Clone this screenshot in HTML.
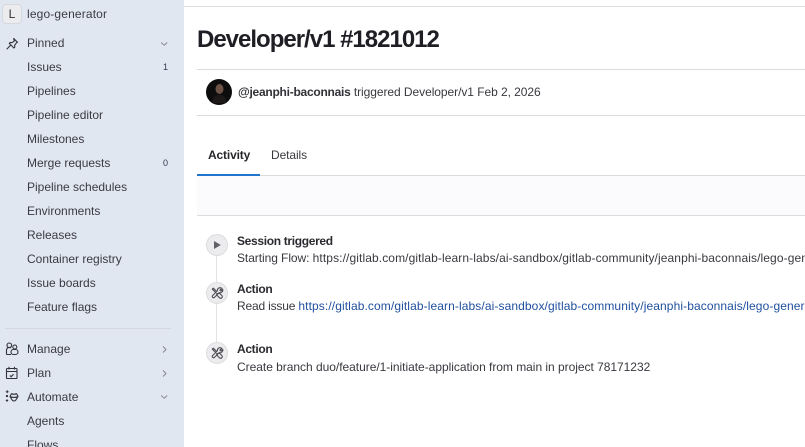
<!DOCTYPE html>
<html><head><meta charset="utf-8">
<style>
html,body{margin:0;padding:0;width:805px;height:447px;overflow:hidden;background:#fff;font-family:"Liberation Sans",sans-serif;color:#3a383f;-webkit-font-smoothing:antialiased}
#wrap{position:absolute;left:0;top:0;width:805px;height:447px;overflow:hidden}
.t{position:absolute;white-space:nowrap;font-size:12px;line-height:16px}
#side{position:absolute;left:0;top:0;width:184px;height:447px;background:#e1e7f0}
.n{left:27px;color:#3a3a44;letter-spacing:0}
.ln{position:absolute;background:#dcdcde;height:1px}
svg{position:absolute;overflow:hidden}
.b{font-weight:bold;color:#2b2a30;letter-spacing:-.33px}
.c{overflow:hidden;width:568px;letter-spacing:-.03px}
.u{letter-spacing:.1px}
.bd{left:163px;font-size:9px;color:#33384f}
</style></head><body><div id="wrap">
<div id="side"></div>
<div style="position:absolute;left:2px;top:4px;width:18px;height:18px;border:1px solid #d5d9e0;border-radius:4px;background:#ececef;text-align:center;font-size:12px;line-height:18px;color:#333">L</div>
<div class="t n" style="top:6px;letter-spacing:.15px">lego-generator</div>

<svg style="left:5px;top:36px" width="16" height="16" viewBox="0 0 16 16" fill="none" stroke="#33333d" stroke-width="1.1"><path d="M8.500 2.300l3.900 3.900-1 .7-1.800 2.400.2 1.800-.9.900-4.600-4.600.9-.9 1.800.2 2.400-1.800z"/><path d="M6 8.800L1.700 13.300"/></svg>
<div class="t n" style="top:35px">Pinned</div>
<svg style="left:160px;top:40px" width="9" height="8" fill="none" stroke="#80808c" stroke-width=".9"><path d="M1.200 2.500l3 2.800 3-2.800"/></svg>
<div class="t n" style="top:59px">Issues</div>
<div class="t bd" style="top:59px">1</div>
<div class="t n" style="top:83px">Pipelines</div>
<div class="t n" style="top:107px">Pipeline editor</div>
<div class="t n" style="top:131px">Milestones</div>
<div class="t n" style="top:155px">Merge requests</div>
<div class="t bd" style="top:155px">0</div>
<div class="t n" style="top:179px">Pipeline schedules</div>
<div class="t n" style="top:203px">Environments</div>
<div class="t n" style="top:227px">Releases</div>
<div class="t n" style="top:251px">Container registry</div>
<div class="t n" style="top:275px">Issue boards</div>
<div class="t n" style="top:299px">Feature flags</div>
<div class="ln" style="left:5px;top:328px;width:166px;background:#d2d7df"></div>

<svg style="left:5px;top:342px" width="14" height="14" fill="none" stroke="#33333d" stroke-width="1.1"><circle cx="4.300" cy="3.300" r="2.300"/><path d="M1.500 12.500V7.800a2.800 2.800 0 0 1 4.500-1.800M1.500 12.500h4.500"/><circle cx="9.800" cy="5" r="2"/><rect x="6" y="7.500" width="7" height="5" rx="2.400"/></svg>
<div class="t n" style="top:341px">Manage</div>
<svg style="left:160px;top:345px" width="9" height="9" fill="none" stroke="#80808c" stroke-width=".9"><path d="M3 1.500l3 3-3 3"/></svg>
<svg style="left:5px;top:366px" width="14" height="14" fill="none" stroke="#33333d" stroke-width="1.1"><rect x="1.500" y="2.500" width="10.500" height="10" rx=".8"/><path d="M1.500 5.500h10.500M4 .8v2.700M9.500 .8v2.700M4.800 9.500l1.300 1.200 2.400-2.400"/></svg>
<div class="t n" style="top:365px">Plan</div>
<svg style="left:160px;top:369px" width="9" height="9" fill="none" stroke="#80808c" stroke-width=".9"><path d="M3 1.500l3 3-3 3"/></svg>
<svg style="left:5px;top:390px" width="15" height="14" fill="none" stroke="#33333d" stroke-width="1.100"><path d="M6.500 3.500c1.500 1 3.500 1 5 0M6.500 3.500L5 6.500l1.800 3c.6 1 1.700 1.500 2.200 1.500s1.600-.5 2.200-1.500l1.800-3-1.500-3M5.200 6.800c2.500.8 5 .8 7.600 0"/><path d="M.8 1.700h2.800M2.200.3v2.800M.8 10.500h2.400M2 9.300v2.400" stroke-width="1"/><circle cx="2" cy="6" r=".6"/></svg>
<div class="t n" style="top:389px">Automate</div>
<svg style="left:160px;top:393px" width="9" height="8" fill="none" stroke="#80808c" stroke-width=".9"><path d="M1.200 2.500l3 2.800 3-2.800"/></svg>
<div class="t n" style="top:413px">Agents</div>
<div class="t n" style="top:437px">Flows</div>

<div class="ln" style="left:184px;top:6px;width:621px"></div>
<div class="t" style="left:197px;top:25px;font-size:24px;line-height:30px;font-weight:bold;color:#1f1e24;letter-spacing:-1px">Developer/v1 #1821012</div>
<div class="ln" style="left:197px;top:69px;width:608px"></div>

<svg style="left:206px;top:79px" width="26" height="26"><circle cx="13" cy="13" r="13" fill="#0d0d0d"/><ellipse cx="13.500" cy="10" rx="4" ry="5" fill="#6e5247"/><path d="M6 24c1-6 3-8 7.500-8s6.500 2 7 8z" fill="#1c1818"/></svg>
<div class="t" style="left:238px;top:84px;color:#3a383f;letter-spacing:-.06px"><b style="color:#333238;letter-spacing:-.25px">@jeanphi-baconnais</b> triggered Developer/v1 Feb 2, 2026</div>
<div class="ln" style="left:197px;top:115px;width:608px"></div>

<div class="t" style="left:208px;top:147px;font-weight:bold;color:#28272d;letter-spacing:-.15px">Activity</div>
<div class="t" style="left:271px;top:147px;color:#3a383f;letter-spacing:-.1px">Details</div>
<div style="position:absolute;left:197px;top:176px;width:608px;height:39px;background:#fbfafd"></div>
<div class="ln" style="left:197px;top:175px;width:608px"></div>
<div style="position:absolute;left:197px;top:174px;width:63px;height:2px;background:#1f75cb"></div>
<div class="ln" style="left:197px;top:215px;width:608px"></div>

<div style="position:absolute;left:216px;top:250px;width:1px;height:100px;background:#e4e4e7"></div>
<svg style="left:206px;top:234px" width="22" height="22"><circle cx="11" cy="11" r="10.500" fill="#ececef" stroke="#dcdcde"/><path d="M8 7v8l6.800-4z" fill="#626168"/></svg>
<svg style="left:206px;top:282px" width="22" height="22" fill="none"><circle cx="11" cy="11" r="10.500" fill="#ececef" stroke="#dcdcde"/><g stroke="#4f4e55" stroke-width="1.100" stroke-linejoin="round"><path d="M6.300 7.200l1-1 3.300 3.200-1 1zM10.500 11.800l3-.6 2.300 2.300a1.600 1.600 0 0 1-2.300 2.300l-2.300-2.300z"/><path d="M15.800 6.300l-1.900 1.900.9.900 1.900-1.800a2.700 2.700 0 0 1-3.500 3.300L8.300 15.500a1.300 1.300 0 0 1-1.800-1.800l4.900-5a2.700 2.700 0 0 1 4.400-2.400z"/></g></svg>
<svg style="left:206px;top:342px" width="22" height="22" fill="none"><circle cx="11" cy="11" r="10.500" fill="#ececef" stroke="#dcdcde"/><g stroke="#4f4e55" stroke-width="1.100" stroke-linejoin="round"><path d="M6.300 7.200l1-1 3.300 3.200-1 1zM10.500 11.800l3-.6 2.300 2.300a1.600 1.600 0 0 1-2.300 2.300l-2.300-2.300z"/><path d="M15.800 6.300l-1.900 1.900.9.900 1.900-1.800a2.700 2.700 0 0 1-3.500 3.300L8.300 15.500a1.300 1.300 0 0 1-1.800-1.800l4.900-5a2.700 2.700 0 0 1 4.400-2.400z"/></g></svg>

<div class="t b" style="left:237px;top:233px">Session triggered</div>
<div class="t c" style="left:237px;top:250px"><span style="letter-spacing:-.07px">Starting Flow: </span><span class="u">https://gitlab.com/gitlab-learn-labs/ai-sandbox/gitlab-community/jeanphi-baconnais/lego-generator</span></div>
<div class="t b" style="left:237px;top:281px">Action</div>
<div class="t c" style="left:237px;top:298px"><span style="letter-spacing:-.18px">Read issue </span><span class="u" style="color:#1f4f9e">https://gitlab.com/gitlab-learn-labs/ai-sandbox/gitlab-community/jeanphi-baconnais/lego-generator</span></div>
<div class="t b" style="left:237px;top:341px">Action</div>
<div class="t c" style="left:237px;top:359px">Create branch duo/feature/1-initiate-application from main in project 78171232</div>
</div></body></html>
